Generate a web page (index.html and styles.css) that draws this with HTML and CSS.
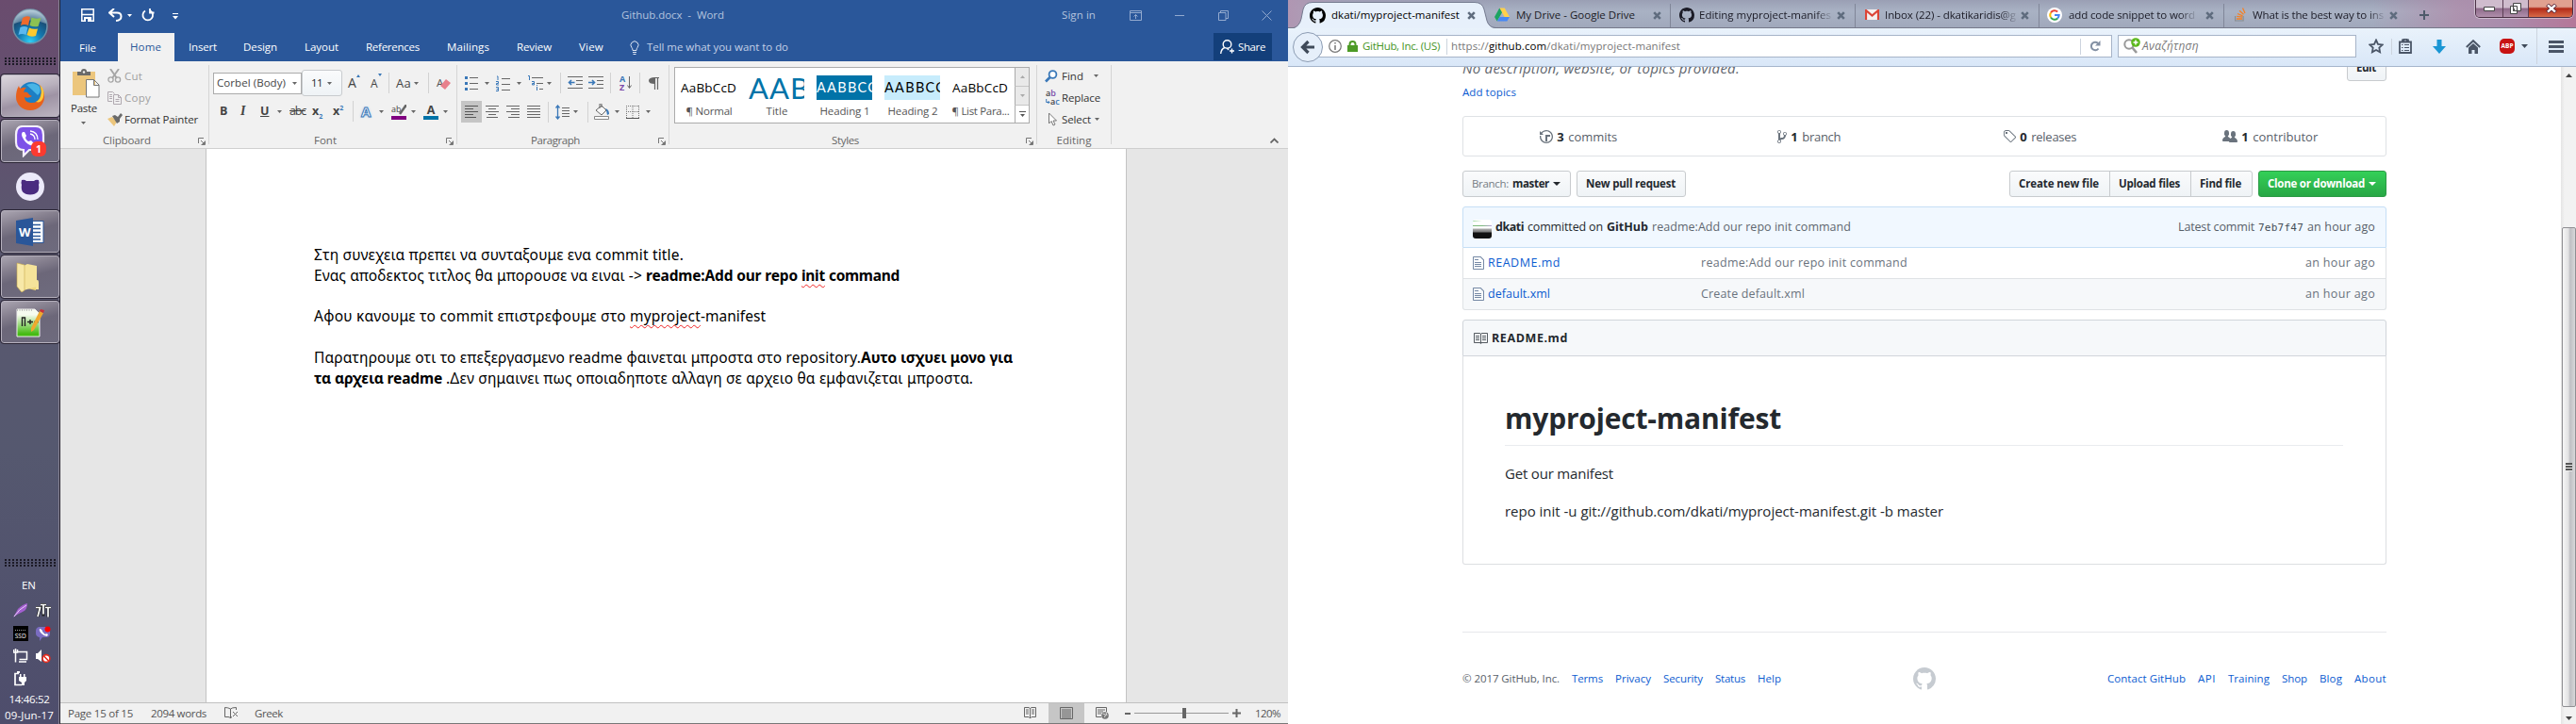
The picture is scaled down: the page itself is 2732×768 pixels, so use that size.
FILE: index.html
```html
<!DOCTYPE html>
<html lang="en">
<head>
<meta charset="utf-8">
<title>Desktop</title>
<link rel="stylesheet" href="styles.css">
</head>
<body>
<svg class="defs" width="0" height="0">
  <symbol id="caret" viewBox="0 0 5 3"><path d="M0 0h5L2.5 3z" fill="currentColor"/></symbol>
  <symbol id="launch" viewBox="0 0 8 8"><path d="M.5 6V.5H6M3 3l3 3M7.500 3.500V7.500H3.500" fill="none" stroke="#777"/><path d="M7 4v3H4z" fill="#777"/></symbol>
  <symbol id="x" viewBox="0 0 9 9"><path d="M1.200 1.200l6.600 6.600M7.800 1.200L1.200 7.800" stroke="#5f6c7e" stroke-width="2.600"/></symbol>
  <symbol id="octo" viewBox="0 0 16 16"><path fill="currentColor" d="M8 0C3.580 0 0 3.580 0 8c0 3.540 2.290 6.530 5.470 7.590.4.07.55-.17.55-.38 0-.19-.01-.82-.01-1.490-2.010.37-2.530-.49-2.690-.94-.09-.23-.48-.94-.82-1.130-.28-.15-.68-.52-.01-.53.63-.01 1.080.58 1.230.82.72 1.210 1.870.87 2.330.66.07-.52.28-.87.51-1.070-1.780-.2-3.640-.89-3.640-3.950 0-.87.31-1.590.82-2.150-.08-.2-.36-1.020.08-2.120 0 0 .67-.21 2.200.82.64-.18 1.320-.27 2-.27.68 0 1.360.09 2 .27 1.530-1.040 2.200-.82 2.200-.82.44 1.100.16 1.920.08 2.120.51.56.82 1.270.82 2.150 0 3.070-1.870 3.750-3.650 3.950.29.25.54.73.54 1.480 0 1.070-.01 1.930-.01 2.200 0 .21.15.46.55.38A8.013 8.013 0 0 0 16 8c0-4.420-3.580-8-8-8z"/></symbol>
  <symbol id="file" viewBox="0 0 12 16"><path fill="currentColor" d="M6 5H2V4h4v1zM2 8h7V7H2v1zm0 2h7V9H2v1zm0 2h7v-1H2v1zm10-7.500V14c0 .55-.45 1-1 1H1c-.55 0-1-.45-1-1V2c0-.55.45-1 1-1h7.500L12 4.500zM11 5L8 2H1v12h10V5z"/></symbol>
</svg>
<div class="desktop">

<aside class="taskbar">
  <svg class="orb" width="40" height="40" viewBox="0 0 40 40">
    <defs><radialGradient id="og" cx=".5" cy=".95" r=".9"><stop offset="0" stop-color="#2fd0f5"/><stop offset=".4" stop-color="#1479b0"/><stop offset=".75" stop-color="#1a4f78"/><stop offset="1" stop-color="#8fb0c4"/></radialGradient></defs>
    <circle cx="20" cy="20" r="18" fill="url(#og)" stroke="#6f93a8" stroke-width="1.500"/>
    <path d="M3 17a17 15 0 0 1 34 0q-17-7-34 0z" fill="#fff" opacity=".3"/>
    <path d="M12 11q4-3 8-1l-2 9q-4-2-8 0z" fill="#ee6a2c"/><path d="M21.500 10.500q4 2 10 .5l-3 9q-5 1-9-1z" fill="#8cc152"/><path d="M9.500 21q4-2 8 0l-2 8q-4-2-8 0z" fill="#5bb8ee"/><path d="M19 21.500q4 2 9 1l-2 7.500q-5 2-9.500-1z" fill="#fcc92e"/>
  </svg>
  <div class="dots"></div>
  <div class="btn lit"><svg width="32" height="32" viewBox="0 0 32 32"><circle cx="17" cy="14" r="13" fill="#1d7fc4"/><path d="M12 4q8-4 14 2 2 6-2 9-6-6-12-11z" fill="#48b4e6"/><path d="M4 5Q1 10 1 17a15 14 0 0 0 30 0Q31 8 26 4q3 7 1 12-3 8-11 7-6-1-6-6 4 2 8-1-3-1-5-4-3-1-4 0 1-4 3-5-4-1-6 1Q4 7 4 5z" fill="#e8611c"/><path d="M26 4q3 6 1 12-1 4-5 6 6 2 8-5 2-8-4-13z" fill="#fdca3a"/></svg></div>
  <div class="btn"><svg width="34" height="34" viewBox="0 0 34 34"><path d="M9 1h14q8 0 8 9v8q0 8-8 8h-7l-6 6v-6q-8 0-8-8v-8Q2 1 9 1z" fill="#7d51e8" stroke="#f4f0fa" stroke-width="2.200"/><path d="M9 7q-2 2 0 6 3 6 8 8 3 1 4-2l-3-3-3 1q-3-2-3-4l1-2-2-4z" fill="#fff"/><path d="M17 6q8 1 8 9M17 9q5 1 5 6" stroke="#fff" stroke-width="1.300" fill="none"/></svg><b class="badge">1</b></div>
  <div class="btn plain"><svg width="30" height="30" viewBox="0 0 30 30"><circle cx="15" cy="15" r="15" fill="#eceafa"/><path d="M6 8q3-1 5 1h8q2-2 5-1 1 3 0 5 2 10-9 10.500Q4 23 6 13q-1-2 0-5z" fill="#4a2b80"/></svg></div>
  <div class="btn"><svg width="30" height="30" viewBox="0 0 30 30"><rect x="17" y="3.500" width="12" height="23" fill="#fff" stroke="#2a579a"/><path d="M17 7.500h9M17 11.500h9M17 15.500h9M17 19.500h9M17 23h9" stroke="#2a579a" stroke-width="1.500"/><path d="M0 3l18-3v30L0 27z" fill="#2a5699"/><text x="3" y="20" class="wi">W</text></svg></div>
  <div class="btn"><svg width="30" height="32" viewBox="0 0 30 32"><path d="M8 4l13 1v25l-13-3z" fill="#efd77c"/><path d="M12 2l10 2v22l-14 4V4z" fill="#f5e39a"/><path d="M1 1l8 2v27l-3 2-5-6z" fill="#f7e8a8" stroke="#c8a94a" stroke-width=".6"/><path d="M21 20q3-3 3 2v7h-3z" fill="#f5e39a"/></svg></div>
  <div class="btn"><svg width="30" height="32" viewBox="0 0 30 32"><defs><linearGradient id="ng" x2="0" y2="1"><stop offset=".2" stop-color="#f6fbef"/><stop offset=".9" stop-color="#46bb14"/></linearGradient></defs><path d="M1 2h19l5 5v24H1z" fill="url(#ng)" stroke="#eee"/><path d="M1 3h17" stroke="#888" stroke-dasharray="1 1.500"/><path d="M6.500 20v-9h3v9M12 15.500h6M15 13v5M19 15.500h5" stroke="#222" stroke-width="1.400" fill="none"/><path d="M25 4l4 2-10 18-3 2v-4z" fill="#f0a92e"/><path d="M26 2l4 1-1 3-4-2z" fill="#c8313a"/></svg></div>
  <div class="dots low"></div>
  <div class="lang"><span data-w="15">EN</span></div>
  <div class="tray">
    <svg viewBox="0 0 16 16"><path d="M0 15L5 6q5-5 10-6 0 7-5 9l-6 3z" fill="#a35fd0"/><path d="M1 14Q6 6 14 2" stroke="#e6cdf5" fill="none"/></svg>
    <svg viewBox="0 0 16 16"><path d="M0 4.500h4.500L2 14M5 1.500h6M8 1.500v12M10 4.500h6M13 4.500v10" stroke="#222" stroke-width="3" fill="none"/><path d="M0 4.500h4.500L2 14M5 1.500h6M8 1.500v10M10 4.500h6M13 4.500v10" stroke="#fff" stroke-width="1.700" fill="none"/></svg>
    <svg viewBox="0 0 16 16"><path d="M0 0h16v16H0z"/><path d="M2 4.500h12" stroke="#999" stroke-dasharray="1 1"/><text x="1.800" y="12.500" class="ssd">SSD</text></svg>
    <svg viewBox="0 0 16 16"><path d="M3 1h9q3 1 3 4v3q0 4-4 4H7l-3 4v-4Q0 11 0 8V5q0-3 3-4z" fill="#7a6cc0"/><path d="M4 3q-1 2 2 5t6 3l1-2-2-1-1 1-3-3V5L5 3z" fill="#fff"/><circle cx="12.500" cy="3.500" r="3" fill="#f00"/></svg>
    <svg viewBox="0 0 16 16"><path d="M4.500 3.500h10v8h-8M6 14h8M2.500 6v8.500M.5 1v3h4V1M2.500 0v6" stroke="#fff" stroke-width="1.500" fill="none"/></svg>
    <svg viewBox="0 0 16 16"><path d="M0 5h2l4-4v13L2 11H0z" fill="#fff"/><circle cx="11" cy="10.500" r="3.900" fill="#fff" stroke="#e52a1c" stroke-width="1.600"/><path d="M8.500 8l5 5" stroke="#e52a1c" stroke-width="1.600"/></svg>
    <svg viewBox="0 0 16 16"><path d="M6 2.500H2v12h7" stroke="#fff" stroke-width="1.700" fill="none"/><path d="M4 0h3v2H4zM6 6h8v4l-2 2v3H9v-3L6 10zM7 3h1.500v3H7zM11 3h1.500v3H11z" fill="#fff"/></svg>
  </div>
  <div class="clock"><span data-w="43">14:46:52</span><span data-w="52">09-Jun-17</span></div>
</aside>

<section class="word">
  <header class="wtitle">
    <svg width="14" height="14" viewBox="0 0 14 14"><path d="M.8.800h12.400v12.400H.8zM.8 6.500h12.400" fill="none" stroke="#fff" stroke-width="1.500"/><path d="M3 9h8v4.500H3z" fill="#fff"/><path d="M5 11h2v3H5z" fill="#2a579a"/></svg>
    <svg width="15" height="14" viewBox="0 0 15 14"><path d="M6 0L1 4.500 6 9M1 4.500h8q4.500 0 4.500 4T8 13" fill="none" stroke="#fff" stroke-width="2"/></svg>
    <svg class="car w" width="5" height="3"><use href="#caret"/></svg>
    <svg width="14" height="14" viewBox="0 0 14 14"><path d="M9.500 2.500A5.300 5.300 0 1 1 4 2.500M9 0v4.500h4.500" fill="none" stroke="#fff" stroke-width="1.800"/></svg>
    <svg width="6" height="7" viewBox="0 0 6 7"><path d="M0 .5h6" stroke="#fff"/><path d="M0 3h6L3 6.500z" fill="#fff"/></svg>
    <span class="dim" data-w="109">Github.docx &nbsp;- &nbsp;Word</span>
    <span class="dim" data-w="36">Sign in</span>
    <svg width="13" height="11" viewBox="0 0 13 11"><path d="M.5.500h12v10H.5zM.5 2.500h12M6.500 9V4.500M4.500 6.500l2-2 2 2" fill="none" stroke="#93aacf"/></svg>
    <svg width="10" height="11" viewBox="0 0 10 11"><path d="M0 5.500h10" stroke="#93aacf"/></svg>
    <svg width="11" height="11" viewBox="0 0 11 11"><path d="M.5 2.500h7.500v8H.5zM2.500 2.500V.5h8v8H8" fill="none" stroke="#93aacf"/></svg>
    <svg width="11" height="11" viewBox="0 0 11 11"><path d="M.5.500l10 10M10.500.5l-10 10" stroke="#93aacf"/></svg>
  </header>
  <nav class="wtabs">
    <span class="file" data-w="18">File</span>
    <span class="home"><span data-w="33">Home</span></span>
    <span data-w="30">Insert</span><span data-w="36">Design</span><span data-w="36">Layout</span><span data-w="57">References</span><span data-w="45">Mailings</span><span data-w="37">Review</span><span data-w="26">View</span>
    <svg width="10" height="15" viewBox="0 0 10 15"><path d="M3 10.500Q3 8.500 2 7.500A4 4 0 1 1 8 7.500Q7 8.500 7 10.500zM3 12.500h4M3.500 14.500h3" fill="none" stroke="#dce5f3"/></svg>
    <span class="tell" data-w="150">Tell me what you want to do</span>
    <span class="share"><svg width="15" height="16" viewBox="0 0 15 16"><circle cx="7.500" cy="5" r="4.300" fill="none" stroke="#fff" stroke-width="1.400"/><path d="M.7 15Q1 10 5 8.500M10 12h5M12.500 9.500v5M9 9.500L8 11" stroke="#fff" stroke-width="1.400" fill="none"/></svg><span data-w="29">Share</span></span>
  </nav>

  <div class="ribbon">
    <div class="grp clip">
      <div class="paste">
        <svg width="29" height="31" viewBox="0 0 29 31"><path d="M0 3h24v25H0z" fill="#ecc67d"/><path d="M5 7V3h4q0-3 3-3t3 3h4v4z" fill="#6a6a6a"/><circle cx="12" cy="3.500" r="1.200" fill="#f1f1f1"/><path d="M14.500 11.500h8l5.500 5.500v13H14.500zM22.500 11.500v6H28" fill="#fff" stroke="#777"/></svg>
        <span data-w="28">Paste</span>
        <svg class="car" width="5" height="3"><use href="#caret"/></svg>
      </div>
      <div class="cmds">
        <div class="off"><svg width="15" height="15" viewBox="0 0 15 15"><path d="M3 0l7 10M12 0L5 10" stroke="#a6a6a6" stroke-width="1.900"/><circle cx="3.500" cy="11.500" r="2.600" fill="none" stroke="#a6a6a6" stroke-width="1.300"/><circle cx="11" cy="11.500" r="2.600" fill="none" stroke="#a6a6a6" stroke-width="1.300"/></svg><span data-w="19">Cut</span></div>
        <div class="off"><svg width="15" height="14" viewBox="0 0 15 14"><path d="M5 10.500H.5V.5h5l2 2M6.500 3.500h5l3 3v7h-8zM11.500 3.500v3h3M2 3.500h3M2 5.500h3M2 7.500h3M8.500 8.500h4M8.500 10.500h4" fill="none" stroke="#b0a9b0"/></svg><span data-w="28">Copy</span></div>
        <div><svg width="16" height="14" viewBox="0 0 16 14"><path d="M0 6l5-2 5 5-3 5z" fill="#ecc67d"/><path d="M5 3l3-1 3 2 3-4 2 2-3 4v3l-3 2z" fill="#6a6a6a"/></svg><span data-w="78">Format Painter</span></div>
      </div>
      <div class="cap"><span data-w="51">Clipboard</span><svg width="8" height="8"><use href="#launch"/></svg></div>
    </div>

    <div class="grp font">
      <div class="row r1">
        <span class="combo a"><span data-w="73">Corbel (Body)</span><svg class="car" width="5" height="3"><use href="#caret"/></svg></span>
        <span class="combo b"><span data-w="12">11</span><svg class="car" width="5" height="3"><use href="#caret"/></svg></span>
        <span class="gA">A<svg width="4" height="3" viewBox="0 0 4 3"><path d="M0 3l2-3 2 3z" fill="#3a78b8"/></svg></span>
        <span class="gA s">A<svg width="4" height="3" viewBox="0 0 4 3"><path d="M0 0l2 3 2-3z" fill="#3a78b8"/></svg></span>
        <i class="sep"></i><span class="gAa" data-w="16">Aa</span><svg class="car" width="5" height="3"><use href="#caret"/></svg><i class="sep"></i>
        <span class="erase">A<svg width="11" height="11" viewBox="0 0 11 11"><path d="M0 7l6-7 5 4-6 7z" fill="#e8808c"/></svg></span>
      </div>
      <div class="row r2">
        <b>B</b><b class="it">I</b><b class="un">U</b><svg class="car" width="5" height="3"><use href="#caret"/></svg><s data-w="17">abc</s><b class="xx">x<sub>2</sub></b><b class="xx">x<sup>2</sup></b><i class="sep"></i>
        <b class="glow">A</b><svg class="car" width="5" height="3"><use href="#caret"/></svg>
        <span class="hl">ab<svg width="9" height="11" viewBox="0 0 9 11"><path d="M9 0L2 10" stroke="#666" stroke-width="2.500"/></svg></span><svg class="car" width="5" height="3"><use href="#caret"/></svg>
        <b class="fc">A</b><svg class="car" width="5" height="3"><use href="#caret"/></svg>
      </div>
      <div class="cap"><span data-w="24">Font</span><svg width="8" height="8"><use href="#launch"/></svg></div>
    </div>

    <div class="grp para">
      <div class="row r1">
        <svg width="14" height="16" viewBox="0 0 14 16"><path d="M5 2.500h9M5 8.500h9M5 14.500h9" stroke="#666"/><path d="M0 1h3v3H0zM0 7h3v3H0zM0 13h3v3H0z" fill="#3a78b8"/></svg><svg class="car" width="5" height="3"><use href="#caret"/></svg>
        <svg width="15" height="17" viewBox="0 0 15 17"><path d="M6 3.500h9M6 9.500h9M6 15.500h9" stroke="#666"/><path d="M1 1h1v4M0 6.500h2.500v2H.5v1.500H3M0 12.500h2.500v4H0M.5 14.500h2" stroke="#3a78b8" fill="none"/></svg><svg class="car" width="5" height="3"><use href="#caret"/></svg>
        <svg width="16" height="17" viewBox="0 0 16 17"><path d="M4 2.500h12M9 8.500h7M12 14.500h4" stroke="#666"/><path d="M0 .5h1.500V5M4 6.500h2.500V10H4.500V8.500h2M9.500 12v4M9.500 10v1" stroke="#3a78b8" fill="none"/></svg><svg class="car" width="5" height="3"><use href="#caret"/></svg><i class="sep"></i>
        <svg width="16" height="14" viewBox="0 0 16 14"><path d="M0 .5h16M9 4.500h7M9 8.500h7M0 12.500h16" stroke="#666"/><path d="M7.500 6.500H2M4 4L1.500 6.500 4 9" stroke="#3a78b8" stroke-width="1.600" fill="none"/></svg>
        <svg width="16" height="14" viewBox="0 0 16 14"><path d="M0 .5h16M9 4.500h7M9 8.500h7M0 12.500h16" stroke="#666"/><path d="M0 6.500h6M4 4l2.500 2.500L4 9" stroke="#3a78b8" stroke-width="1.600" fill="none"/></svg><i class="sep"></i>
        <span class="az"><b>A</b><b>Z</b><svg width="5" height="14" viewBox="0 0 5 14"><path d="M2.500 0v12M.5 9.500l2 3 2-3" stroke="#666" fill="none"/></svg></span><i class="sep"></i>
        <svg width="11" height="13" viewBox="0 0 11 13"><path d="M5.500.5H11M6.500.5V13M9.500.5V13" stroke="#666" stroke-width="1.200"/><path d="M6.500 0v7Q0 7 0 3.500T6.500 0z" fill="#666"/></svg>
      </div>
      <div class="row r2">
        <span class="on"><svg width="14" height="13" viewBox="0 0 14 13"><path d="M0 .5h14M0 3.500h9M0 6.500h14M0 9.500h9M0 12.500h12" stroke="#555"/></svg></span>
        <svg width="14" height="13" viewBox="0 0 14 13"><path d="M0 .5h14M3 3.500h8M0 6.500h14M3 9.500h8M1 12.500h12" stroke="#666"/></svg>
        <svg width="14" height="13" viewBox="0 0 14 13"><path d="M0 .5h14M5 3.500h9M0 6.500h14M5 9.500h9M2 12.500h12" stroke="#666"/></svg>
        <svg width="14" height="13" viewBox="0 0 14 13"><path d="M0 .5h14M0 3.500h14M0 6.500h14M0 9.500h14M0 12.500h14" stroke="#666"/></svg><i class="sep"></i>
        <svg width="15" height="16" viewBox="0 0 15 16"><path d="M7 3.500h8M7 6.500h8M7 9.500h8M7 12.500h8" stroke="#666"/><path d="M2.500 1v14M.5 3.500l2-2.500 2 2.500M.5 12.500l2 2.500 2-2.500" stroke="#3a78b8" stroke-width="1.300" fill="none"/></svg><svg class="car" width="5" height="3"><use href="#caret"/></svg><i class="sep"></i>
        <svg width="17" height="17" viewBox="0 0 17 17"><path d="M2 7l6-5 5 5-5 5zM6 5V0h2v4" fill="#f8f8f8" stroke="#666"/><path d="M12 5q4 1 4 6l-2 1-1-5z" fill="#3a78b8"/><path d="M.5 13.500h15v3H.5z" fill="#fff" stroke="#888"/></svg><svg class="car" width="5" height="3"><use href="#caret"/></svg>
        <svg width="14" height="14" viewBox="0 0 14 14"><path d="M.5 0v13M7 0v13M13.500 0v13M0 .5h14M0 6.500h14" stroke="#777" stroke-dasharray="1 1"/><path d="M0 13.500h14" stroke="#555"/></svg><svg class="car" width="5" height="3"><use href="#caret"/></svg>
      </div>
      <div class="cap"><span data-w="52">Paragraph</span><svg width="8" height="8"><use href="#launch"/></svg></div>
    </div>

    <div class="grp styles">
      <div class="gallery">
        <div class="st"><div class="sm"><span data-w="59">AaBbCcD</span></div><span data-w="49">¶ Normal</span></div>
        <div class="st"><div class="sm big"><span>AAB</span></div><span data-w="23">Title</span></div>
        <div class="st"><div class="sm h1s"><span>AABBCC</span></div><span data-w="53">Heading 1</span></div>
        <div class="st"><div class="sm h2s"><span>AABBCC</span></div><span data-w="53">Heading 2</span></div>
        <div class="st"><div class="sm"><span data-w="59">AaBbCcD</span></div><span data-w="61">¶ List Para...</span></div>
        <div class="gs"><i><svg width="5" height="3" viewBox="0 0 5 3"><path d="M0 3h5L2.500 0z" fill="#aaa"/></svg></i><i><svg class="car l" width="5" height="3"><use href="#caret"/></svg></i><i class="m"><svg width="7" height="7" viewBox="0 0 7 7"><path d="M0 .5h7" stroke="#555"/><path d="M1 3h5L3.500 6z" fill="#555"/></svg></i></div>
      </div>
      <div class="cap"><span data-w="29">Styles</span><svg width="8" height="8"><use href="#launch"/></svg></div>
    </div>

    <div class="grp edit">
      <div class="cmds">
        <div><svg width="14" height="14" viewBox="0 0 14 14"><circle cx="8.500" cy="5" r="3.900" fill="#fff" stroke="#3a78b8" stroke-width="1.800"/><path d="M5.500 8L1 12.500" stroke="#3a78b8" stroke-width="2.600"/></svg><span data-w="23">Find</span><svg class="car fa" width="5" height="3"><use href="#caret"/></svg></div>
        <div><span class="rep"><b>a<i>b</i></b><b class="lo"><svg width="5" height="6" viewBox="0 0 5 6"><path d="M.7 0v3.500H4M2.500 2L4 3.500 2.500 5" fill="none" stroke="#3a78b8"/></svg>a<i class="c">c</i></b></span><span data-w="41">Replace</span></div>
        <div><svg width="14" height="15" viewBox="0 0 14 15"><path d="M4.500 1v11l2.500-2.500L9 14l2-1-2-4h3.500z" fill="#fff" stroke="#777"/></svg><span data-w="31">Select</span><svg class="car" width="5" height="3"><use href="#caret"/></svg></div>
      </div>
      <div class="cap"><span data-w="37">Editing</span></div>
    </div>
    <svg class="fold" width="9" height="6" viewBox="0 0 9 6"><path d="M.5 5.500l4-4 4 4" fill="none" stroke="#666" stroke-width="1.800"/></svg>
  </div>

  <div class="canvas">
    <article class="page">
      <p><span data-w="392">Στη συνεχεια πρεπει να συνταξουμε ενα commit title.</span></p>
      <p><span data-w="348">Ενας αποδεκτος τιτλος θα μπορουσε να ειναι -&gt;</span><b data-w="161">readme:Add our repo</b><b class="err" data-w="25">init</b><b data-w="75">command</b></p>
      <p></p>
      <p><span data-w="331">Αφου κανουμε το commit επιστρεφουμε στο</span><span class="err" data-w="75">myproject</span><span class="tight" data-w="69">-manifest</span></p>
      <p></p>
      <p><span data-w="580">Παρατηρουμε οτι το επεξεργασμενο readme φαινεται μπροστα στο repository.</span><b class="tight" data-w="161">Αυτο ισχυει μονο για</b></p>
      <p><b data-w="136">τα αρχεια readme</b><span data-w="559">.Δεν σημαινει πως οποιαδηποτε αλλαγη σε αρχειο θα εμφανιζεται μπροστα.</span></p>
    </article>
  </div>

  <footer class="wstatus">
    <span data-w="69">Page 15 of 15</span><span data-w="59">2094 words</span>
    <svg width="15" height="13" viewBox="0 0 15 13"><path d="M6.500 12V2Q4 .5.500.500V10.500H4q2 0 2.500 1.500Q7 10.500 8 10.500M6.500 2Q8 .5 12.500.500V3M9 5l5 5M14 5l-5 5" fill="none" stroke="#666"/></svg>
    <span data-w="30">Greek</span>
    <svg width="13" height="13" viewBox="0 0 13 13"><path d="M6.500 12V1.500L5 .5H.5v10H5l1.500 1.500L8 10.500h4.500V.5H8L6.500 1.500M2 3h3M2 5h3M2 7h3M8 3h3M8 5h3M8 7h3" fill="none" stroke="#666"/></svg>
    <span class="sel"><svg width="14" height="13" viewBox="0 0 14 13"><path d="M.5.500h13v12H.5zM2 3h10M2 5h10M2 7h10M2 9h10M2 11h10" fill="none" stroke="#666"/></svg></span>
    <svg width="14" height="13" viewBox="0 0 14 13"><path d="M6 10.500H.5V.5h11V5M2 3h8M2 5h6M2 7h4" fill="none" stroke="#666"/><circle cx="10" cy="9" r="3.800" fill="#777"/><path d="M7.500 7l3 1-1 3M11 6l1 3" stroke="#ddd" fill="none"/></svg>
    <i class="minus"></i><span class="slider"><i></i></span>
    <svg width="9" height="9" viewBox="0 0 9 9"><path d="M0 4.500h9M4.500 0v9" stroke="#666" stroke-width="2"/></svg>
    <span data-w="27">120%</span>
  </footer>
</section>

<section class="fx">
  <div class="strip">
    <div class="tab act"><svg class="shape" width="214" height="28" viewBox="0 0 214 28"><path d="M0 28Q6 26 8 18L10 8Q12 .5 20 .5H192Q200 .5 202 8L205 20Q207 27 214 28z" fill="#e7f0fb"/><path d="M0 27.500Q6 26 8 18L10 8Q12 .5 20 .5H192Q200 .5 202 8L205 20Q207 27 214 27.500" fill="none" stroke="#757b90"/></svg><svg class="ic" width="17" height="17"><use href="#octo"/></svg><span data-w="136">dkati/myproject-manifest</span><svg class="cl" width="9" height="9"><use href="#x"/></svg></div>
    <div class="tab t2"><svg class="ic" width="16" height="15" viewBox="0 0 16 15"><path d="M5.300.500h5.400L16 10h-5.400z" fill="#ffd04b"/><path d="M5.300.500L0 10l2.700 4.500L8 5.300z" fill="#1da462"/><path d="M5.500 10H16l-2.700 4.500H2.800z" fill="#4688f4"/></svg><span data-w="126">My Drive - Google Drive</span><svg class="cl" width="9" height="9"><use href="#x"/></svg></div>
    <div class="tab t3"><svg class="ic" width="16" height="16"><use href="#octo"/></svg><span class="fade" data-w="140">Editing myproject-manifes</span><svg class="cl" width="9" height="9"><use href="#x"/></svg></div>
    <div class="tab t4"><svg class="ic" width="15" height="11" viewBox="0 0 15 11"><path d="M0 0h15v11H0z" fill="#f5f0ef"/><path d="M1 11V1l6.500 5.500L14 1v10" fill="none" stroke="#dc4537" stroke-width="2.200"/></svg><span class="fade" data-w="139">Inbox (22) - dkatikaridis@g</span><svg class="cl" width="9" height="9"><use href="#x"/></svg></div>
    <div class="tab t5"><svg class="ic" width="16" height="16" viewBox="0 0 16 16"><circle cx="8" cy="8" r="8" fill="#fff"/><g fill="none" stroke-width="2"><path d="M11.200 4.500A4.700 4.700 0 0 0 4 5.500" stroke="#ea4335"/><path d="M4 5.500a4.700 4.700 0 0 0 0 5" stroke="#fbbc05"/><path d="M4 10.500a4.700 4.700 0 0 0 7.200 1" stroke="#34a853"/><path d="M11.200 11.500Q12.700 10 12.700 8H8" stroke="#4285f4"/></g></svg><span class="fade" data-w="134">add code snippet to word</span><svg class="cl" width="9" height="9"><use href="#x"/></svg></div>
    <div class="tab t6"><svg class="ic" width="12" height="15" viewBox="0 0 12 15"><path d="M.6 9v5h8.500V9" fill="none" stroke="#8a8d90" stroke-width="1.200"/><path d="M2 12h6M2.200 9.300l6 .8M3 6.500l5.500 2.300M5 3.300l4.500 4M8.500.5l2.500 5.500" stroke="#f48024" stroke-width="1.300"/></svg><span class="fade" data-w="139">What is the best way to ins</span><svg class="cl" width="9" height="9"><use href="#x"/></svg></div>
    <svg class="plus" width="10" height="10" viewBox="0 0 10 10"><path d="M0 5h10M5 0v10" stroke="#4f5b6b" stroke-width="2"/></svg>
    <div class="wb"><i><svg width="12" height="5" viewBox="0 0 12 5"><path d="M.5.500h11v4H.5z" fill="#fff" stroke="#444"/></svg></i><i><svg width="12" height="12" viewBox="0 0 12 12"><path d="M3.500.500h8v8h-8zM.5 3.500h7v8h-7z" fill="#fff" stroke="#444"/><path d="M3 6h2v3H3z" fill="#555"/></svg></i><i class="c"><svg width="12" height="10" viewBox="0 0 12 10"><path d="M1.500 1l9 8M10.500 1l-9 8" stroke="#523" stroke-width="4"/><path d="M2 1.300l8 7.400M10 1.300L2 8.700" stroke="#fff" stroke-width="2.400"/></svg></i></div>
  </div>
  <div class="nav">
    <span class="back"><svg width="16" height="16" viewBox="0 0 16 16"><path d="M15 8H3M8.500 2L2.500 8l6 6" fill="none" stroke="#3f4a59" stroke-width="3.200"/></svg></span>
    <div class="url">
      <svg width="14" height="14" viewBox="0 0 14 14"><circle cx="7" cy="7" r="6.300" fill="none" stroke="#777" stroke-width="1.200"/><path d="M7 3v1.500M7 6v5" stroke="#777" stroke-width="1.500"/></svg>
      <svg width="11" height="12" viewBox="0 0 11 12"><path d="M0 5h11v7H0z" fill="#4d9a26"/><path d="M2.500 6V4q0-3 3-3t3 3v2" fill="none" stroke="#4d9a26" stroke-width="2"/></svg>
      <span class="ev" data-w="82">GitHub, Inc. (US)</span><i></i>
      <span class="addr" data-w="243">https://<b>github.com</b>/dkati/myproject-manifest</span><i></i>
      <svg width="11" height="12" viewBox="0 0 11 12"><path d="M8.500 8.500A4.200 4.200 0 1 1 8 3" fill="none" stroke="#8390a3" stroke-width="2"/><path d="M10.500 0v5.500H5z" fill="#8390a3"/></svg>
    </div>
    <div class="find"><svg width="18" height="18" viewBox="0 0 18 18"><circle cx="6" cy="7" r="4.700" fill="none" stroke="#999" stroke-width="2"/><path d="M9 10l5 6" stroke="#999" stroke-width="2.600"/><circle cx="13" cy="5" r="4.800" fill="#5cb81c"/><path d="M10.500 5h5M13 2.500v5" stroke="#fff" stroke-width="1.500"/></svg><em data-w="60">Αναζήτηση</em></div>
    <div class="tools">
      <svg width="16" height="16" viewBox="0 0 16 16"><path d="M8 1.500l2 4.300 4.700.6-3.400 3.200.8 4.700L8 12l-4.100 2.300.8-4.700L1.300 6.400 6 5.800z" fill="none" stroke="#4a5566" stroke-width="1.800"/></svg><i></i>
      <svg width="14" height="16" viewBox="0 0 14 16"><path d="M1 3.500h12v11.500H1zM4 3V1.500h1.500V.5h3v1h1.500V3" fill="none" stroke="#4a5566" stroke-width="1.800"/><path d="M3 6.500h1.500M6 6.500h5M3 9.500h1.500M6 9.500h5M3 12.500h1.500M6 12.500h5" stroke="#4a5566"/></svg>
      <svg width="14" height="15" viewBox="0 0 14 15"><path d="M4.500 0h5v7H14l-7 8-7-8h4.500z" fill="#1a96d4"/></svg>
      <svg width="16" height="15" viewBox="0 0 16 15"><path d="M.8 8L8 1.200 15.200 8" fill="none" stroke="#4a5566" stroke-width="2"/><path d="M3 8.500L8 4l5 4.500V15H9.500v-4h-3v4H3z" fill="#4a5566"/></svg>
      <span class="abp">ABP</span><svg class="car" width="7" height="4" viewBox="0 0 7 4"><path d="M0 0h7L3.500 4z" fill="#3f4a59"/></svg><i class="tall"></i>
      <svg width="16" height="13" viewBox="0 0 16 13"><path d="M0 1.500h16M0 6.500h16M0 11.500h16" stroke="#4a5566" stroke-width="2.800"/></svg>
    </div>
  </div>

  <div class="view">
    <main class="gh">
      <div class="desc"><em data-w="294">No description, website, or topics provided.</em><span class="b edit-b"><b data-w="21">Edit</b></span></div>
      <a class="topics" data-w="57">Add topics</a>
      <div class="stats">
        <div><svg width="14" height="16" viewBox="0 0 14 16"><path fill="#6a737d" d="M8 13H6V6h5v2H8v5zM7 1C4.810 1 2.870 2.020 1.590 3.590L0 2v4h4L2.500 4.500C3.550 3.170 5.170 2.300 7 2.300c3.140 0 5.700 2.560 5.700 5.700s-2.560 5.700-5.700 5.700A5.710 5.710 0 0 1 1.300 8c0-.34.03-.67.09-1H.08C.03 7.330 0 7.660 0 8c0 3.860 3.140 7 7 7s7-3.140 7-7-3.140-7-7-7z"/></svg><b data-w="8">3</b><span data-w="52">commits</span></div>
        <div><svg width="10" height="16" viewBox="0 0 10 16"><path fill="#6a737d" d="M10 5c0-1.110-.89-2-2-2a1.993 1.993 0 0 0-1 3.720v.3c-.02.52-.23.98-.63 1.380-.4.4-.86.61-1.380.63-.83.02-1.480.16-2 .45V4.720a1.993 1.993 0 0 0-1-3.720C.88 1 0 1.890 0 3a2 2 0 0 0 1 1.720v6.560c-.59.35-1 .99-1 1.720 0 1.110.89 2 2 2 1.110 0 2-.89 2-2 0-.53-.2-1-.53-1.360.09-.06.48-.41.59-.47.25-.11.56-.17.94-.17 1.050-.05 1.950-.45 2.750-1.250S8.950 7.770 9 6.730h-.02C9.590 6.370 10 5.730 10 5zM2 1.800c.66 0 1.200.55 1.200 1.200 0 .65-.55 1.200-1.200 1.200C1.350 4.200.8 3.650.8 3c0-.65.55-1.200 1.200-1.200zm0 12.410c-.66 0-1.200-.55-1.200-1.200 0-.65.55-1.200 1.200-1.200.65 0 1.200.55 1.200 1.200 0 .65-.55 1.200-1.200 1.200zm6-8c-.66 0-1.200-.55-1.200-1.200 0-.65.55-1.200 1.200-1.200.65 0 1.200.55 1.200 1.200 0 .65-.55 1.200-1.200 1.200z"/></svg><b data-w="8">1</b><span data-w="41">branch</span></div>
        <div><svg width="14" height="16" viewBox="0 0 14 16"><path fill="#6a737d" d="M7.730 1.730C7.260 1.260 6.620 1 5.960 1H3.500C2.130 1 1 2.130 1 3.500v2.470c0 .66.27 1.300.73 1.770l6.060 6.060c.39.39 1.020.39 1.410 0l4.590-4.590a.996.996 0 0 0 0-1.410L7.730 1.730zM2.380 7.090c-.31-.3-.47-.7-.47-1.130V3.500c0-.88.72-1.590 1.590-1.590h2.470c.42 0 .83.16 1.130.47l6.140 6.130-4.730 4.730-6.130-6.150zM3.010 3h2v2H3V3h.01z"/></svg><b data-w="8">0</b><span data-w="48">releases</span></div>
        <div><svg width="16" height="16" viewBox="0 0 16 16"><path fill="#6a737d" d="M16 12.999c0 .439-.45 1-1 1H7.995c-.539 0-.994-.447-.995-.999H1c-.54 0-1-.561-1-1 0-2.634 3-4 3-4s.229-.409 0-1c-.841-.621-1.058-.59-1-3 .058-2.419 1.367-3 2.500-3s2.442.58 2.500 3c.058 2.410-.159 2.379-1 3-.229.59 0 1 0 1s1.549.711 2.420 2.088C9.196 9.369 10 8.999 10 8.999s.229-.409 0-1c-.841-.62-1.058-.59-1-3 .058-2.419 1.367-3 2.500-3s2.437.581 2.495 3c.059 2.410-.158 2.380-1 3-.229.59 0 1 0 1s3.005 1.366 3.005 4"/></svg><b data-w="8">1</b><span data-w="69">contributor</span></div>
      </div>
      <div class="acts">
        <span class="b"><span class="mut" data-w="39">Branch:</span><b class="ms" data-w="39">master</b><svg width="8" height="4" viewBox="0 0 8 4"><path d="M0 0h8L4 4z" fill="#24292e"/></svg></span>
        <span class="b"><b data-w="95">New pull request</b></span>
        <span class="bg"><span class="b"><b data-w="85">Create new file</b></span><span class="b"><b data-w="65">Upload files</b></span><span class="b"><b data-w="44">Find file</b></span></span>
        <span class="b green"><b data-w="103">Clone or download</b><svg width="8" height="4" viewBox="0 0 8 4"><path d="M0 0h8L4 4z" fill="#fff"/></svg></span>
      </div>
      <div class="commit"><i class="ava"></i><b data-w="30">dkati</b><span data-w="80">committed on</span><b data-w="44">GitHub</b><span class="mut6" data-w="211">readme:Add our repo init command</span><span class="rt"><span data-w="81">Latest commit</span><code data-w="48">7eb7f47</code><span data-w="72">an hour ago</span></span></div>
      <div class="frow"><svg width="12" height="16"><use href="#file"/></svg><a data-w="77">README.md</a><span data-w="219">readme:Add our repo init command</span><span data-w="74">an hour ago</span></div>
      <div class="frow alt"><svg width="12" height="16"><use href="#file"/></svg><a data-w="66">default.xml</a><span data-w="110">Create default.xml</span><span data-w="74">an hour ago</span></div>
      <div class="rhead"><svg width="16" height="16" viewBox="0 0 16 16"><path fill="#555b61" d="M3 5h4v1H3V5zm0 3h4V7H3v1zm0 2h4V9H3v1zm11-5h-4v1h4V5zm0 2h-4v1h4V7zm0 2h-4v1h4V9zm2-6v9c0 .55-.45 1-1 1H9.500l-1 1-1-1H2c-.55 0-1-.45-1-1V3c0-.55.45-1 1-1h5.500l1 1 1-1H15c.55 0 1 .45 1 1zm-8 .5L7.500 3H2v9h6V3.500zm7-.5H9.500l-.5.5V12h6V3z"/></svg><b data-w="81">README.md</b></div>
      <div class="readme"><h1><span data-w="293">myproject-manifest</span></h1><p><span data-w="115">Get our manifest</span></p><p><span data-w="465">repo init -u git://github.com/dkati/myproject-manifest.git -b master</span></p></div>
      <footer class="foot">
        <div><span data-w="103">© 2017 GitHub, Inc.</span><a data-w="33">Terms</a><a data-w="38">Privacy</a><a data-w="42">Security</a><a data-w="32">Status</a><a data-w="25">Help</a></div>
        <svg width="24" height="24"><use href="#octo"/></svg>
        <div class="fr"><a data-w="83">Contact GitHub</a><a data-w="19">API</a><a data-w="44">Training</a><a data-w="27">Shop</a><a data-w="24">Blog</a><a data-w="34">About</a></div>
      </footer>
    </main>
    <div class="sb"><svg width="7" height="4" viewBox="0 0 7 4"><path d="M0 4h7L3.500 0z" fill="#444"/></svg><div class="thumb"><i></i></div><svg width="7" height="4" viewBox="0 0 7 4"><path d="M0 0h7L3.500 4z" fill="#444"/></svg></div>
  </div>
</section>
</div>
<script src="fit.js"></script>
</body>
</html>
```
FILE: styles.css
```css
* { box-sizing: border-box; }
body { margin: 0; overflow: hidden; background: #fff; font: 11.5px/16px "Open Sans", "Noto Sans", sans-serif; color: #444; }
.defs { position: absolute; }
svg { display: block; flex: none; }
i { font-style: normal; }
[data-w] { display: inline-block; white-space: pre; flex: none; justify-self: start; }
.desktop { display: grid; grid-template-columns: 64px 1302px 1366px; height: 768px; }

/* taskbar */
.taskbar { background: linear-gradient(#6a4c6e 0, #62506f 120px, #5a586f 250px, #55586f 480px, #4e4d6c 768px); border-right: 1px solid #1f1c2a; box-shadow: inset -1px 0 #8b8798; display: flex; flex-direction: column; align-items: flex-start; }
.orb { margin: 8px 0 13px 12px; }
.dots { width: 55px; height: 9px; margin: 0 0 9px 5px; background: radial-gradient(circle at 1px 1px, #1c1a26 1px, transparent 1.400px) 0 0/4px 3px; }
.btn { position: relative; width: 62px; height: 45px; margin: 0 0 3px 1px; border: 1px solid #b5b0bd; border-radius: 3px; outline: 1px solid #2a2535; background: linear-gradient(165deg, #aaa5b1 0, #86808f 28%, #6c6779 50%, #6e6b7e 100%); display: grid; place-items: center; }
.btn.lit { background: linear-gradient(165deg, #dcd6de 0, #b9b1bd 40%, #9e93a4 60%, #bcb4c0 100%); }
.btn.plain { border-color: transparent; outline: none; background: none; }
.badge { position: absolute; left: 31px; top: 22px; width: 16px; height: 16px; border-radius: 6px; background: #fb3b30; color: #fff; font-size: 10.500px; line-height: 16px; text-align: center; }
.wi { font: bold 13px "Open Sans", sans-serif; fill: #fff; }
.ssd { font: 6.500px "Open Sans", sans-serif; fill: #fff; }
.dots.low { margin-top: 226px; }
.lang { margin: 2px 0 11px 23px; color: #fff; }
.tray { display: grid; grid-template-columns: 16px 16px; gap: 8px; margin-left: 14px; }
.tray svg { width: 16px; height: 16px; }
.clock { width: 62px; display: flex; flex-direction: column; align-items: center; color: #fff; margin-top: 5px; line-height: 17px; }

/* word chrome */
.word { display: grid; grid-template-rows: 35px 30px 93px 587px 23px; }
.wtitle { background: #2a579a; color: #fff; display: grid; align-items: center; padding: 0 0 3px 22px; grid-template-columns: 29px 20px 15px 33px 476px 467px 72px 48px 46px 46px 20px; }
.dim { color: #b4c4de; }
.wtitle > :nth-child(5) { margin-top: 2px; }
.wtabs { background: #2a579a; color: #fff; display: grid; align-items: center; grid-template-columns: 41px 75px 58px 65px 65px 86px 74px 66px 54px 18px 601px 63px; padding-left: 20px; }
.home { width: 60px; height: 30px; background: #f1f1f1; color: #2a579a; padding: 7px 0 0 13px; }
.file { padding-top: 1px; }
.tell { color: #c3d0e6; }
.share { background: #133f7a; height: 29px; display: flex; align-items: center; gap: 4px; padding: 0 7px; align-self: start; }
.ribbon { background: #f1f1f1; border-bottom: 1px solid #cfcfcf; display: grid; grid-template-columns: 158px 263px 225px 390px 79px 1fr; }
.grp { border-right: 1px solid #d5d5d5; margin: 4px 0; height: 84px; display: grid; grid-template-rows: 72px 12px; position: relative; }
.car { color: #666; }
.car.w { color: #fff; }
.car.l { color: #aaa; }
.sep { width: 1px; height: 22px; background: #d2d2d2; }
.cap { color: #666; display: flex; align-items: center; justify-content: center; grid-column: 1 / -1; padding-top: 4px; padding-right: 16px; }
.edit .cap { padding-right: 0; }
.cap svg { position: absolute; right: 3px; bottom: -1px; }
.clip { grid-template-columns: 50px 1fr; }
.paste { padding: 4px 0 0 11px; color: #333; display: flex; flex-direction: column; align-items: flex-start; }
.paste span { margin-top: 3px; }
.paste svg:first-child { margin-left: 2px; }
.paste .car { margin: 6px 0 0 11px; }
.cmds { display: grid; grid-template-rows: repeat(3, 23px); color: #333; }
.cmds > div { display: grid; grid-template-columns: 18px auto 1fr; align-items: center; }
.cmds .off { color: #a0a0a0; }
.cmds .car { margin-left: 4px; }
.cmds .fa { margin-left: 11px; }
.font, .para { grid-template-rows: 38px 22px 24px; }
.font .cap, .para .cap { padding-top: 16px; }
.row { display: grid; align-items: center; }
.row > *, .wtitle > *, .wtabs > *, .wstatus > * { justify-self: start; }
.font .r1 { grid-template-columns: 95px 48px 24px 19px 8px 19px 15px 9px 20px; padding-left: 4px; }
.combo { height: 23px; border: 1px solid #ababab; background: #fff; display: flex; align-items: center; justify-content: space-between; padding: 0 4px 0 3px; }
.combo.a { width: 94px; }
.combo.b { width: 43px; margin-left: -1px; }
.gA { position: relative; font-size: 14px; }
.gA.s { font-size: 12px; padding-top: 2px; }
.gA svg { position: absolute; left: 9px; top: -1px; }
.gA.s svg { left: 8px; }
.gAa { font-size: 13px; }
.erase { position: relative; color: #555; }
.erase svg { position: absolute; left: 4px; top: 4px; }
.font .r2 { grid-template-columns: 22px 21px 18px 13px 24px 22px 21px 9px 19px 13px 21px 13px 21px 10px; padding-left: 11px; font-size: 12.500px; }
.it { font-style: italic; font-family: "Liberation Serif", serif; font-size: 14px; }
.un { text-decoration: underline; }
.xx { line-height: 12px; }
.xx sub, .xx sup { font-size: 7px; color: #3a78b8; line-height: 0; }
.glow { color: #fff; -webkit-text-stroke: 1px #3a78b8; font-size: 15px; text-shadow: 0 0 3px #8ab8e8; }
.hl { position: relative; font-size: 9px; line-height: 12px; width: 16px; height: 17px; border-bottom: 4px solid #800080; }
.hl svg { position: absolute; left: 7px; top: 1px; }
.fc { width: 16px; height: 17px; line-height: 13px; text-align: center; border-bottom: 4px solid #0073a8; }
.para .r1 { grid-template-columns: 21px 12px 22px 12px 20px 14px 8px 22px 23px 10px 21px 10px 12px; padding-left: 8px; }
.az { position: relative; width: 13px; height: 18px; font-size: 9px; line-height: 9px; display: grid; color: #7a4ba8; }
.az b:first-child { color: #3a78b8; }
.az svg { position: absolute; left: 8px; top: 2px; }
.para .r2 { grid-template-columns: 26px 22px 22px 22px 8px 19px 15px 7px 22px 12px 21px 5px; padding-left: 4px; }
.on { background: #c5c5c5; width: 22px; height: 23px; display: grid; place-items: center; }
.gallery { margin: 2px 0 0 5px; width: 377px; height: 60px; border: 1px solid #ababab; background: #fff; display: grid; grid-template-columns: repeat(5, 72px) 15px; }
.st { text-align: center; color: #555; }
.sm { margin: 8px 7px 4px 6px; height: 26px; overflow: hidden; white-space: nowrap; color: #000; line-height: 26px; font-size: 13.500px; text-align: left; }
.big { font: 31px/26px Lato, sans-serif; color: #0073a8; letter-spacing: 1px; }
.h1s, .h2s { font-family: Lato, sans-serif; font-size: 14.500px; letter-spacing: 1.300px; background: #0073a8; color: #fff; }
.h2s { background: #c7ecfc; color: #000; }
.gs { display: grid; grid-template-rows: 20px 20px 18px; }
.gs i { border-left: 1px solid #ababab; border-bottom: 1px solid #c6c6c6; background: #e9e9e9; display: grid; place-items: center; }
.gs .m { background: #fff; border-bottom: 0; }
.edit .cmds { padding-left: 8px; }
.rep { display: grid; grid-template-rows: 8px 9px; font-size: 9px; line-height: 8px; color: #444; padding-left: 1px; }
.rep b { display: flex; align-items: center; font-weight: 600; }
.rep i { color: #7a4ba8; }
.rep .c { color: #3a78b8; }
.fold { justify-self: end; align-self: end; margin: 0 10px 5px 0; }

/* document */
.canvas { background: #e6e6e6; display: grid; padding-left: 154px; }
.page { width: 977px; background: #fff; border: solid #c3c3c3; border-width: 0 1px; padding: 102px 0 0 114px; color: #000; font: 15.500px/21.750px "Noto Sans", "Open Sans", sans-serif; }
.page p { margin: 0; height: 21.750px; display: flex; gap: 4px; }
.tight { margin-left: -4px; }
.err { text-decoration: underline wavy #e22 1px; text-underline-offset: 3px; text-decoration-skip-ink: none; }
.wstatus { background: #f1f1f1; border-top: 1px solid #c0c0c0; border-bottom: 1px solid #777; color: #555; display: grid; align-items: center; padding-left: 8px; grid-template-columns: 88px 78px 32px 816px 26px 50px 31px 10px 104px 24px 27px; }
.sel { background: #c6c6c6; width: 38px; height: 21px; display: grid; place-items: center; padding-right: 1px; }
.minus { width: 6px; height: 2px; background: #666; }
.slider { width: 100px; height: 11px; background: linear-gradient(#999, #999) 0 5px/100% 1px no-repeat; }
.slider i { display: block; width: 4px; height: 11px; background: #666; margin-left: 51px; }

/* browser */
.fx { display: grid; grid-template-rows: 30px 41px 697px; width: 1366px; }
.strip { background: linear-gradient(90deg, rgba(176,150,178,1) 0, rgba(168,160,185,.5) 60px, transparent 240px, transparent 1150px, rgba(175,140,170,.8) 1240px, #a98cac 1290px, #b57799 1366px), linear-gradient(#9a9fb4, #a9b2c4 12px, #a0a8bb); border-bottom: 1px solid #76798a; display: flex; position: relative; color: #1b1b26; }
.tab { position: relative; height: 29px; display: flex; align-items: center; padding-top: 2px; }
.tab + .tab { border-left: 1px solid transparent; border-image: linear-gradient(transparent 15%, #808698 15% 95%, transparent 95%) 1; }
.tab.t2 { border-image: none; border: 0; }
.cl { position: absolute; right: 6px; top: 12px; }
.act { margin: 2px 0 0 6px; width: 213px; height: 28px; color: #000; padding: 0 0 0 17px; }
.act > * { position: relative; }
.act .shape { position: absolute; left: 0; top: 0; }
.act .cl { position: absolute; right: 20px; top: 10px; }
.act .ic { margin-right: 6px; }
.t2 { width: 186px; }
.t2 .ic { margin-right: 7px; }
.t2 .cl { right: 9px; }
.t3 { width: 196px; padding-left: 9px; }
.t3 .ic { margin-right: 5px; }
.t3 .cl { right: 10px; }
.t4 { width: 195px; padding-left: 10px; }
.t4 .ic { margin-right: 6px; }
.t4 .cl { right: 10px; }
.t5 { width: 196px; padding-left: 8px; }
.t5 .ic { margin-right: 7px; }
.t5 .cl { right: 10px; }
.t6 { width: 195px; padding-left: 11px; }
.t6 .ic { margin-right: 7px; }
.t6 .cl { right: 10px; }
.fade { -webkit-mask: linear-gradient(90deg, #000 88%, transparent 102%); mask: linear-gradient(90deg, #000 88%, transparent 102%); }
.plus { margin: 11px 0 0 13px; }
.wb { position: absolute; right: 3px; top: 0; width: 104px; height: 19px; display: grid; grid-template-columns: 29px 27px 48px; border: 1px solid #4a3045; border-top: 0; border-radius: 0 0 5px 5px; overflow: hidden; box-shadow: 0 0 0 1px rgba(255,255,255,.4); }
.wb i { display: grid; place-items: center; border-right: 1px solid #5c4056; background: linear-gradient(#cfbccd 45%, #8e6a8a 50%, #b08fab); }
.wb .c { background: linear-gradient(#e0a090 40%, #b22a18 50%, #d86a48); border: 0; }
.nav { position: relative; background: linear-gradient(#e9f2fb, #d9e7f8); border-bottom: 1px solid #a6b6cc; display: grid; grid-template-columns: 874px 259px 1fr; align-items: center; padding-bottom: 2px; color: #777; }
.back { position: absolute; z-index: 1; left: 5px; top: 4px; width: 32px; height: 32px; border-radius: 50%; border: 1px solid #8c9cb3; background: #e6effa; display: grid; place-items: center; }
.url { margin-left: 20px; height: 24px; border: 1px solid #a6b4c8; background: #fff; display: grid; align-items: center; padding-left: 22px; grid-template-columns: 20px 16px 89px 5px 667px 11px 14px; }
.url i, .tools i { width: 1px; height: 17px; background: #ccd4de; }
.ev { color: #46951f; }
.addr b { color: #000; font-weight: 400; }
.find { margin-left: 6px; width: 253px; height: 24px; border: 1px solid #a6b4c8; background: #fff; display: flex; align-items: center; gap: 2px; padding-left: 5px; font-size: 12px; }
.tools { display: grid; align-items: center; grid-template-columns: 24px 8px 36px 35px 36px 23px 16px 13px 16px; padding-left: 13px; }
.tools .tall { height: 38px; }
.abp { width: 16px; height: 16px; border-radius: 5px; background: #c81212; color: #fff; font: bold 6.500px/16px "Open Sans", sans-serif; text-align: center; }
.view { position: relative; display: flex; background: #fff; overflow: hidden; }
.gh { margin-left: 185px; width: 980px; color: #24292e; font-size: 12.500px; }
.gh b { font-weight: 700; }
.gh a { color: #0b5bd0; }
.desc { display: flex; justify-content: space-between; height: 15px; color: #5f666e; font-size: 15px; }
.desc em { margin-top: -7px; }
.b { height: 28px; border: 1px solid #c8cbce; border-radius: 3px; background: linear-gradient(#fafbfc, #eff3f6); padding: 0 10px 0 9px; display: flex; align-items: center; font-size: 11.500px; color: #24292e; flex: none; }
.edit-b { margin-top: -13px; }
.topics { font-size: 11.500px; margin: 4px 0 0; }
.topics + .stats { margin-top: 17px; }
.stats { border: 1px solid #dfe2e5; border-radius: 3px; height: 43px; display: grid; grid-template-columns: repeat(4, 1fr); align-items: center; font-size: 13px; color: #586069; }
.stats div { display: flex; justify-content: center; align-items: center; gap: 4px; }
.stats b { color: #24292e; }
.acts { display: flex; gap: 6px; margin-top: 15px; }
.mut { color: #757c84; }
.ms { margin: 0 4px; }
.bg { display: flex; margin-left: auto; }
.bg .b { padding-right: 11px; }
.bg .b + .b { margin-left: -1px; border-radius: 0; }
.bg .b:first-child { border-radius: 3px 0 0 3px; }
.bg .b:last-child { border-radius: 0 3px 3px 0; }
.b.green { background: linear-gradient(#34d058, #28a745); border-color: #2b9a45; color: #fff; gap: 4px; }
.commit { margin-top: 10px; height: 44px; border: 1px solid #c6dff5; border-radius: 3px 3px 0 0; background: #f1f8ff; display: flex; align-items: center; gap: 4px; padding: 0 11px 0 10px; }
.ava { width: 20px; height: 20px; margin-top: 4px; border-radius: 3px; background: linear-gradient(90deg, #9bd69b, transparent 70%) 0 1px/14px 1px no-repeat, linear-gradient(90deg, #7ab87a 50%, #b8a0d8) 0 6px/100% 1px no-repeat, linear-gradient(#fff 9px, #aaa 10px, #777 13px, #111 14px); }
.mut6 { color: #5f676f; }
.rt { margin-left: auto; display: flex; gap: 4px; color: #586069; }
code { font: 11px/17px "DejaVu Sans Mono", monospace; color: #444d56; }
.frow { height: 33px; border: solid #dfe2e5; border-width: 0 1px 1px; display: grid; align-items: center; grid-template-columns: 16px 226px 1fr 74px; padding: 0 11px 0 10px; color: #6a737d; }
.frow svg { color: #7689a5; }
.alt { background: #f6f8fa; border-radius: 0 0 3px 3px; }
.rhead { margin-top: 10px; height: 39px; border: 1px solid #d1d5da; border-radius: 3px 3px 0 0; background: #f6f8fa; display: flex; align-items: center; gap: 4px; padding-left: 10px; }
.readme { height: 221px; border: solid #dddfe2; border-width: 0 1px 1px; border-radius: 0 0 3px 3px; padding: 45px 45px 0 44px; font-size: 15px; }
.readme h1 { margin: 0; height: 50px; font-size: 30px; line-height: 42px; border-bottom: 1px solid #eaecef; }
.readme p { margin: 0; height: 40px; padding-top: 17px; line-height: 24px; }
.foot { margin-top: 71px; border-top: 1px solid #e6e8eb; height: 99px; display: grid; grid-template-columns: 478px 24px 478px; align-items: center; color: #586069; font-size: 11.500px; }
.foot div { display: flex; gap: 13px; }
.foot .fr { justify-content: flex-end; }
.foot svg { color: #c6cbd1; }
.sb { position: absolute; right: 0; top: 0; bottom: 0; width: 16px; background: linear-gradient(90deg, #e4e4e4, #f2f2f2 4px); display: flex; flex-direction: column; align-items: center; padding-top: 7px; }
.thumb { width: 15px; height: 509px; margin: 159px 0 10px; border: 1px solid #8f8f93; border-radius: 2px; background: linear-gradient(90deg, #f6f6f6, #e2e2e3 45%, #bfbfc3 60%, #d8d8da); display: grid; place-items: center; }
.thumb i { width: 7px; height: 9px; background: repeating-linear-gradient(#555 0 2px, #eee 2px 3px); }
```
FILE: fit.js
```js
// Tracks every label so that it fills the width given in data-w.
document.querySelectorAll('[data-w]').forEach(function (el) {
  var n = el.textContent.length;
  var extra = (parseFloat(el.dataset.w) - el.getBoundingClientRect().width) / n;
  el.style.letterSpacing = extra.toFixed(3) + 'px';
});
```
